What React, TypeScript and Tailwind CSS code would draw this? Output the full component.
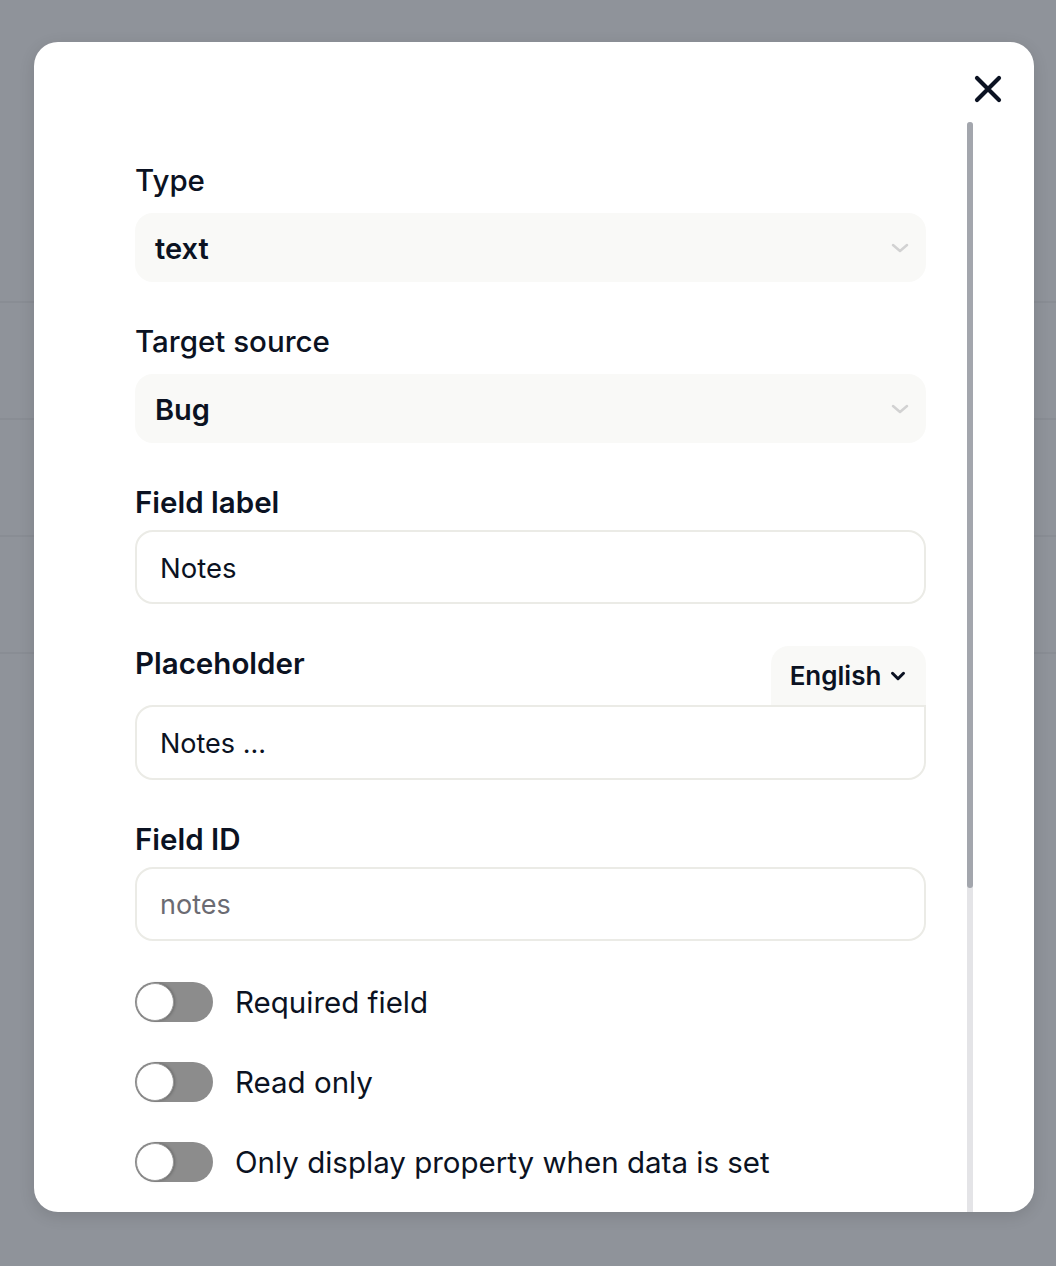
import { ChevronDown } from 'lucide-react'

const font = { fontFamily: 'Inter, "Noto Sans", sans-serif' }

function SelectBox({ value }: { value: string }) {
  return (
    <div className="flex items-center justify-between h-[69px] rounded-[18px] bg-[#f9f9f7] pl-[20px] pr-[16px]">
      <span className="pt-[2px] text-[29px] font-semibold text-[#0b1222]">{value}</span>
      <svg width="20" height="12" viewBox="0 0 20 12" fill="none">
        <path d="M3 3l7 6 7-6" stroke="#d2d2d2" strokeWidth="2.5" strokeLinecap="round" strokeLinejoin="round" />
      </svg>
    </div>
  )
}

function Toggle({ label }: { label: string }) {
  return (
    <div className="h-[40px] flex items-center gap-[22px]">
      <div className="w-[78px] h-[40px] rounded-full bg-[#8c8c8c] p-[1px] flex items-center">
        <div className="w-[38px] h-[38px] rounded-full bg-white border border-[#9a9a9a] shadow-[1px_0_3px_rgba(0,0,0,0.25)]" />
      </div>
      <span className="pt-[2px] text-[29.5px] leading-none text-[#0b1222]">{label}</span>
    </div>
  )
}

export default function App() {
  return (
    <div className="relative w-[1056px] h-[1266px] bg-[#8f939a] overflow-hidden" style={font}>
      {/* page behind the overlay */}
      <div className="flex flex-col pt-[186px]">
        {Array.from({ length: 4 }).map((_, i) => (
          <div key={i} className="h-[117px] border-b-2 border-[#898d94]" />
        ))}
      </div>

      <div className="absolute left-[34px] top-[42px] w-[1000px] h-[1170px] bg-white rounded-[24px] overflow-hidden flex flex-col shadow-[0_4px_16px_rgba(0,0,0,0.12)]">
        <div className="h-[80px] flex justify-end pt-[33px] pr-[32px]">
          <svg width="28" height="28" viewBox="0 0 28 28" fill="none">
            <path d="M3 3l22 22M25 3L3 25" stroke="#0b1222" strokeWidth="4.2" strokeLinecap="round" />
          </svg>
        </div>

        <div className="flex-1 flex min-h-0 pl-[101px]">
          <div className="w-[791px] pt-[40px] flex flex-col">
            <label className="text-[29.5px] leading-[36px] font-medium text-[#0b1222]">Type</label>
            <div className="mt-[15px]">
              <SelectBox value="text" />
            </div>

            <label className="mt-[41px] text-[29.5px] leading-[36px] font-medium text-[#0b1222]">Target source</label>
            <div className="mt-[15px]">
              <SelectBox value="Bug" />
            </div>

            <label className="mt-[41px] text-[29.5px] leading-[36px] font-semibold text-[#0b1222]">Field label</label>
            <div className="mt-[10px] h-[74px] rounded-[18px] border-2 border-[#ebebe6] flex items-center px-[23px] pt-[3px] text-[27.5px] text-[#0b1222]">
              Notes
            </div>

            <div className="mt-[41px] flex items-start justify-between">
              <label className="text-[29.5px] leading-[36px] font-semibold text-[#0b1222]">Placeholder</label>
              <div className="mt-[1px] h-[59px] w-[155px] rounded-t-[18px] bg-[#f9f9f7] flex items-center justify-center gap-[6px] pl-[2px]">
                <span className="text-[26px] font-semibold text-[#0b1222]">English</span>
                <ChevronDown className="w-[22px] h-[22px] text-[#0b1222]" strokeWidth={3.3} />
              </div>
            </div>
            <div className="h-[75px] rounded-[18px] rounded-tr-none border-2 border-[#ebebe6] flex items-center px-[23px] pt-[3px] text-[27px] text-[#0b1222]">
              Notes ...
            </div>

            <label className="mt-[41px] text-[29.5px] leading-[36px] font-semibold text-[#0b1222]">Field ID</label>
            <div className="mt-[10px] h-[74px] rounded-[18px] border-2 border-[#ebebe6] flex items-center px-[23px] pt-[3px] text-[27px] text-[#6b6b72]">
              notes
            </div>

            <div className="mt-[41px] flex flex-col gap-[40px]">
              <Toggle label="Required field" />
              <Toggle label="Read only" />
              <Toggle label="Only display property when data is set" />
            </div>
          </div>

          <div className="ml-[41px] w-[6px] rounded-t-full bg-[#e4e4e7] flex flex-col">
            <div className="h-[766px] rounded-full bg-[#a3a6ad]" />
          </div>
        </div>
      </div>
    </div>
  )
}
